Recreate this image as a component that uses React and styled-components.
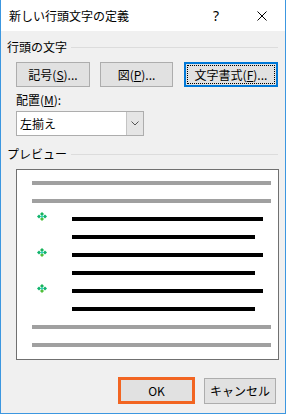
import React from "react";
import styled, { createGlobalStyle } from "styled-components";

const Global = createGlobalStyle`
  html, body { margin: 0; padding: 0; background: #ffffff; }
  body { font-family: "Noto Sans CJK JP", sans-serif; }
`;

const Win = styled.div`
  width: 286px;
  height: 414px;
  box-sizing: border-box;
  border: 1px solid #3c97e0;
  border-top: none;
  background: #f0f0f0;
  display: flex;
  flex-direction: column;
  font-family: "Noto Sans CJK JP", "Noto Sans", sans-serif;
  font-size: 12px;
  color: #000;
`;

const TitleBar = styled.div`
  height: 31px;
  background: #ffffff;
  display: flex;
  align-items: center;
  padding-left: 8px;
`;

const Title = styled.div`
  flex: 1;
  font-size: 12px;
  line-height: 16px;
`;

const Caption = styled.div`
  width: 46px;
  height: 31px;
  display: flex;
  align-items: center;
  justify-content: center;
  font-family: "Noto Sans", "DejaVu Sans", sans-serif;
  font-size: 14px;
`;

const Content = styled.div`
  padding: 0 7px 0 6px;
  display: flex;
  flex-direction: column;
`;

const Header = styled.div`
  margin-top: ${(p) => p.$top}px;
  display: flex;
  align-items: center;
  height: 16px;
  line-height: 16px;
`;

const Rule = styled.div`
  flex: 1;
  height: 1px;
  background: #dcdcdc;
  margin-left: 4px;
`;

const ButtonRow = styled.div`
  margin-top: 7px;
  padding-left: 9px;
  display: flex;
  gap: 10px;
`;

const Button = styled.div`
  width: ${(p) => p.$w}px;
  height: 25px;
  box-sizing: border-box;
  border: 1px solid #adadad;
  background: #e1e1e1;
  display: flex;
  align-items: center;
  justify-content: center;
  line-height: 16px;
`;

const FocusButton = styled(Button)`
  border: 2px solid #0078d7;
  padding: 1px;
  margin-left: 1px;
`;

const FocusRing = styled.div`
  flex: 1;
  align-self: stretch;
  border: 1px dotted #000;
  display: flex;
  align-items: center;
  justify-content: center;
`;

const FieldLabel = styled.div`
  margin-top: 5px;
  padding-left: 9px;
  line-height: 16px;
`;

const Select = styled.div`
  margin: 3px 0 0 9px;
  width: 128px;
  height: 25px;
  box-sizing: border-box;
  border: 1px solid #adadad;
  background: #fff;
  display: flex;
  align-items: stretch;
`;

const SelectText = styled.div`
  flex: 1;
  padding-left: 3px;
  display: flex;
  align-items: center;
  line-height: 16px;
`;

const SelectArrow = styled.div`
  width: 16px;
  background: #e5e5e5;
  border-left: 1px solid #c4c4c4;
  display: flex;
  align-items: center;
  justify-content: center;
`;

const Preview = styled.div`
  margin: 7px 0 0 9px;
  width: 263px;
  height: 191px;
  box-sizing: border-box;
  border: 1px solid #707070;
  background: #fff;
  padding: 11px 0 0 15px;
  display: flex;
  flex-direction: column;
  gap: 14px;
`;

const GrayLine = styled.div`
  width: 239px;
  height: 4px;
  background: #a0a0a0;
`;

const TextRow = styled.div`
  height: 4px;
  display: flex;
  align-items: flex-end;
`;

const BulletSlot = styled.div`
  width: 40px;
  height: 9px;
  flex: none;
  display: flex;
  align-items: flex-end;
`;

const BlackLine = styled.div`
  width: ${(p) => p.$w}px;
  height: 4px;
  background: #000;
  flex: none;
`;

const Footer = styled.div`
  margin-top: 17px;
  padding-right: 9px;
  display: flex;
  justify-content: flex-end;
  align-items: flex-end;
  gap: 9px;
`;

const OkButton = styled.div`
  width: 77px;
  height: 27px;
  box-sizing: border-box;
  border: 3px solid #f26522;
  background: #e1e1e1;
  display: flex;
  align-items: center;
  justify-content: center;
  line-height: 16px;
`;

const CancelButton = styled(Button)`
  width: 72px;
  height: 26px;
`;

const Bullet = () => (
  <svg width="10" height="9" viewBox="0 0 10 9" style={{ marginLeft: 5 }}>
    <polygon points="5,0 7,2 5,4 3,2" fill="#19b35a" />
    <polygon points="5,5 7,7 5,9 3,7" fill="#4fbf3a" />
    <polygon points="2,2.5 4,4.5 2,6.5 0,4.5" fill="#0fb36c" />
    <polygon points="8,2.5 10,4.5 8,6.5 6,4.5" fill="#0fb36c" />
    <rect x="4" y="3.5" width="2" height="2" fill="#2ad0c0" />
  </svg>
);

const Close = () => (
  <svg width="10" height="10" viewBox="0 0 10 10">
    <path d="M0.5 0.5 L9.5 9.5 M9.5 0.5 L0.5 9.5" stroke="#000" strokeWidth="1" fill="none" />
  </svg>
);

const Chevron = () => (
  <svg width="8" height="5" viewBox="0 0 8 5">
    <path d="M0.5 0.5 L4 4 L7.5 0.5" stroke="#555" strokeWidth="1" fill="none" />
  </svg>
);

const rows = [
  { type: "gray" },
  { type: "gray" },
  { type: "text", bullet: true, w: 191 },
  { type: "text", bullet: false, w: 183 },
  { type: "text", bullet: true, w: 191 },
  { type: "text", bullet: false, w: 183 },
  { type: "text", bullet: true, w: 191 },
  { type: "text", bullet: false, w: 183 },
  { type: "gray" },
  { type: "gray" },
];

export default function App() {
  return (
    <>
      <Global />
      <Win>
        <TitleBar>
          <Title>新しい行頭文字の定義</Title>
          <Caption>?</Caption>
          <Caption>
            <Close />
          </Caption>
        </TitleBar>
        <Content>
          <Header $top={8}>
            <span>行頭の文字</span>
            <Rule />
          </Header>
          <ButtonRow>
            <Button $w={74}>
              記号(<u>S</u>)...
            </Button>
            <Button $w={73}>
              図(<u>P</u>)...
            </Button>
            <FocusButton $w={94}>
              <FocusRing>
                文字書式(<u>F</u>)...
              </FocusRing>
            </FocusButton>
          </ButtonRow>
          <FieldLabel>
            配置(<u>M</u>):
          </FieldLabel>
          <Select>
            <SelectText>左揃え</SelectText>
            <SelectArrow>
              <Chevron />
            </SelectArrow>
          </Select>
          <Header $top={10}>
            <span>プレビュー</span>
            <Rule />
          </Header>
          <Preview>
            {rows.map((r, i) =>
              r.type === "gray" ? (
                <GrayLine key={i} />
              ) : (
                <TextRow key={i}>
                  <BulletSlot>{r.bullet && <Bullet />}</BulletSlot>
                  <BlackLine $w={r.w} />
                </TextRow>
              )
            )}
          </Preview>
        </Content>
        <Footer>
          <OkButton>OK</OkButton>
          <CancelButton>キャンセル</CancelButton>
        </Footer>
      </Win>
    </>
  );
}
